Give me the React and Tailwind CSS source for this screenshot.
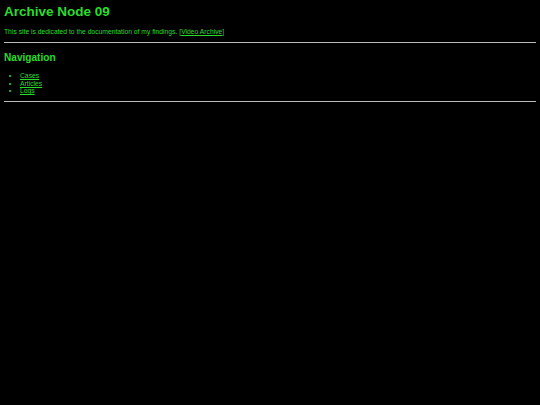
import React from 'react'

const App = () => {
  return (
    <div className="min-h-[405px] bg-black px-[4px] pt-[4px] text-[6.75px] leading-[1.15] text-[#2adc2a] [font-family:'Liberation_Sans',Arial,sans-serif]">
      {/* Header */}
      <h1 className="text-[13.5px] font-bold leading-[1.15]">Archive Node 09</h1>
      <p className="mt-[8px]">
        This site is dedicated to the documentation of my findings.{' '}
        [<a href="#" className="underline">Video Archive</a>]
      </p>
      <hr className="mt-[7px] border-0 border-t border-[#bbbbbb]" />

      {/* Navigation */}
      <h2 className="mt-[9px] text-[10.1px] font-bold leading-[1.15]">Navigation</h2>
      <ul className="mt-[8px] list-disc pl-[16px]">
        <li>
          <a href="#" className="underline">Cases</a>
        </li>
        <li>
          <a href="#" className="underline">Articles</a>
        </li>
        <li>
          <a href="#" className="underline">Logs</a>
        </li>
      </ul>
      <hr className="mt-[6px] border-0 border-t border-[#bbbbbb]" />
    </div>
  )
}

export default App
